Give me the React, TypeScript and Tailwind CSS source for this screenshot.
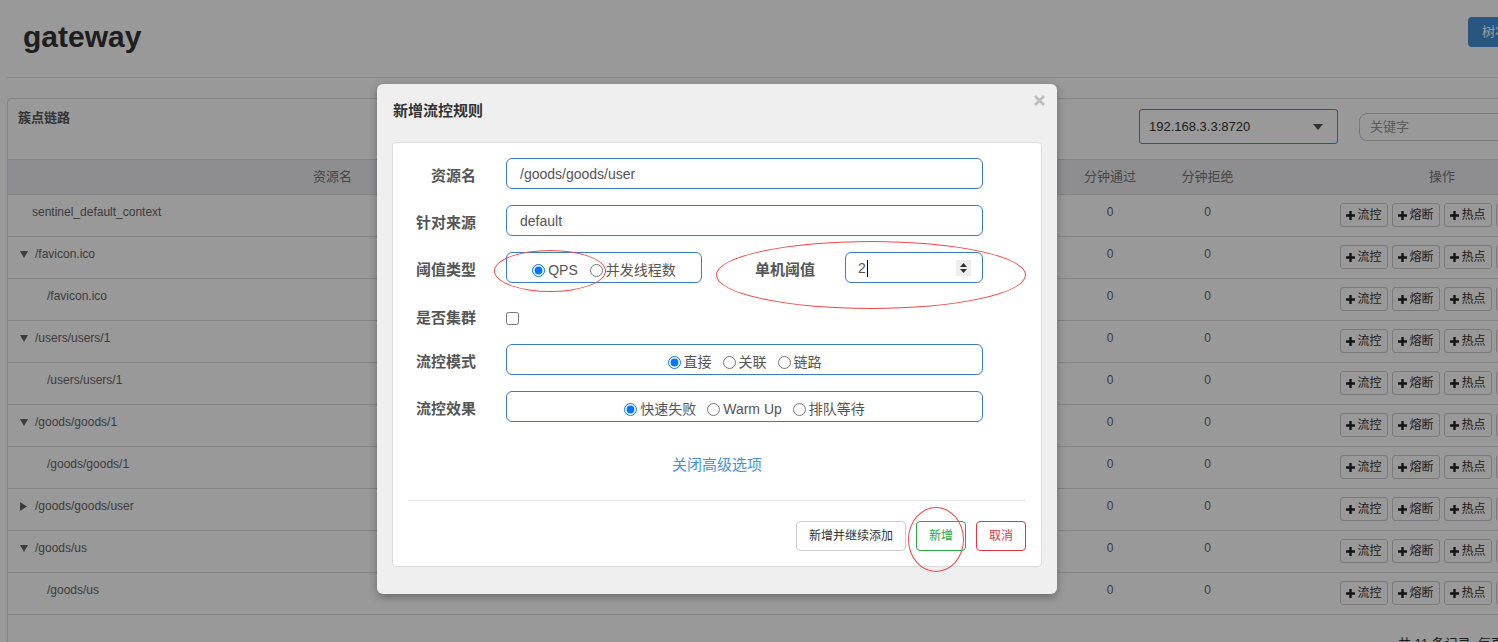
import React from "react";

const rows = [
  { name: "sentinel_default_context", indent: "pl-[24px]", toggle: "" },
  { name: "/favicon.ico", indent: "pl-[12px]", toggle: "down" },
  { name: "/favicon.ico", indent: "pl-[39px]", toggle: "" },
  { name: "/users/users/1", indent: "pl-[12px]", toggle: "down" },
  { name: "/users/users/1", indent: "pl-[39px]", toggle: "" },
  { name: "/goods/goods/1", indent: "pl-[12px]", toggle: "down" },
  { name: "/goods/goods/1", indent: "pl-[39px]", toggle: "" },
  { name: "/goods/goods/user", indent: "pl-[12px]", toggle: "right" },
  { name: "/goods/us", indent: "pl-[12px]", toggle: "down" },
  { name: "/goods/us", indent: "pl-[39px]", toggle: "" },
];

const cols = "grid grid-cols-[649px_101px_101px_101px_101px_98px_97px_372px]";

const Plus = () => (
  <svg width="9" height="9" viewBox="0 0 9 9" className="shrink-0">
    <path d="M3.3 0h2.4v3.3H9v2.4H5.7V9H3.3V5.7H0V3.3h3.3z" fill="#222" />
  </svg>
);

const ActionBtn = ({ label }: { label: string }) => (
  <button className="flex h-[24px] w-[48px] items-center justify-center gap-[2px] rounded-[3px] border border-[#ccc] bg-white text-[12px] leading-[20px] text-[#333]">
    <Plus />
    {label}
  </button>
);

const Toggle = ({ dir }: { dir: string }) =>
  dir === "down" ? (
    <svg width="8" height="7" viewBox="0 0 8 7" className="mr-[7px] shrink-0">
      <path d="M0 0h8L4 7z" fill="#666" />
    </svg>
  ) : (
    <svg width="8" height="9" viewBox="0 0 8 9" className="mr-[7px] shrink-0">
      <path d="M0 0v9l7-4.5z" fill="#666" />
    </svg>
  );

const Radio = ({ label, name, checked }: { label: string; name: string; checked?: boolean }) => (
  <label className="flex items-center gap-[3px]">
    <input type="radio" name={name} defaultChecked={checked} className="m-0 h-[13px] w-[13px]" />
    <span>{label}</span>
  </label>
);

const Field = ({ label, children }: { label: string; children: React.ReactNode }) => (
  <div className="flex h-[31px] items-center">
    <span className="w-[68px] shrink-0 pt-[6px] text-right text-[15px] font-bold text-[#555]">{label}</span>
    <div className="ml-[30px] flex h-full items-center">{children}</div>
  </div>
);

const box = "h-[31px] rounded-[6px] border border-[#3a7cc0] bg-white text-[14px] text-[#555]";

export default function App() {
  return (
    <div className="relative h-[642px] w-[1498px] overflow-hidden bg-white font-['Liberation_Sans','Noto_Sans_CJK_SC',sans-serif]">
      <div className="w-[1636px]">
        <div className="mx-[7px] flex h-[78px] items-start justify-between border-b border-[#e5e5e5] pl-[16px] pr-[81px]">
          <h1 className="mt-[20px] text-[30px] font-bold leading-[33px] text-[#333]">gateway</h1>
          <button className="mt-[17px] h-[30px] w-[80px] rounded-[4px] bg-[#4590d8] text-[13px] text-white">树状视图</button>
        </div>

        <div className="mx-[7px] mt-[20px] rounded-[4px] border border-[#ddd] pb-[40px]">
          <div className="flex h-[61px] items-start border-b border-[#ddd] pt-[10px]">
            <span className="pl-[10px] text-[13px] font-semibold leading-[18px] text-[#555]">簇点链路</span>
            <div className="ml-auto mr-[69px] flex items-center gap-[21px]">
              <div className="flex h-[35px] w-[199px] items-center justify-between rounded-[3px] border border-[#4590d8] bg-white pl-[9px] pr-[14px] text-[13px] text-[#333]">
                192.168.3.3:8720
                <svg width="10" height="6" viewBox="0 0 10 6">
                  <path d="M0 0h10L5 6z" fill="#555" />
                </svg>
              </div>
              <div className="flex h-[28px] w-[200px] items-center rounded-[8px] border border-[#ccc] bg-white pl-[10px] text-[13px] text-[#999]">
                关键字
              </div>
            </div>
          </div>

          <div className={`${cols} h-[35px] items-center border-b border-[#ddd] bg-[#ededf0] text-center text-[13px] text-[#777]`}>
            <span>资源名</span>
            <span>通过QPS</span>
            <span>拒绝QPS</span>
            <span>并发数</span>
            <span>平均RT</span>
            <span>分钟通过</span>
            <span>分钟拒绝</span>
            <span>操作</span>
          </div>

          {rows.map((r, i) => (
            <div key={i} className={`${cols} h-[42px] items-start border-b border-[#ddd] pt-[8px] text-[12px] leading-[18px] text-[#666]`}>
              <div className={`flex items-center ${r.indent}`}>
                {r.toggle && <Toggle dir={r.toggle} />}
                <span>{r.name}</span>
              </div>
              <span className="text-center">0</span>
              <span className="text-center">0</span>
              <span className="text-center">0</span>
              <span className="text-center">0</span>
              <span className="text-center">0</span>
              <span className="text-center">0</span>
              <div className="flex justify-center gap-[4px]">
                <ActionBtn label="流控" />
                <ActionBtn label="熔断" />
                <ActionBtn label="热点" />
                <ActionBtn label="授权" />
              </div>
            </div>
          ))}

          <div className="ml-[1390px] mt-[20px] text-[13px] leading-[18px] text-[#333]">共 11 条记录, 每页 16 条记录</div>
        </div>
      </div>

      <div className="absolute inset-0 bg-black/40" />

      <div className="absolute left-[377px] top-[84px] h-[510px] w-[680px] rounded-[6px] bg-[#efefef] shadow-[0_3px_9px_rgba(0,0,0,0.3)]">
        <div className="flex h-[58px] items-start justify-between pl-[16px] pr-[12px] pt-[16px]">
          <h4 className="text-[15px] font-bold leading-[21px] text-[#333]">新增流控规则</h4>
          <svg width="11" height="11" viewBox="0 0 11 11" className="mt-[-5px]">
            <path d="M1 1l9 9M10 1l-9 9" stroke="#bdbdbd" strokeWidth="2.6" />
          </svg>
        </div>

        <div className="mx-[15px] h-[425px] rounded-[4px] border border-[#ddd] bg-white px-[15px] pt-[15px]">
          <div className="flex flex-col gap-[16px]">
            <Field label="资源名">
              <div className={`${box} flex w-[477px] items-center pl-[13px] pt-[2px]`}>/goods/goods/user</div>
            </Field>
            <Field label="针对来源">
              <div className={`${box} flex w-[477px] items-center pl-[13px] pt-[2px]`}>default</div>
            </Field>
            <Field label="阈值类型">
              <div className={`${box} flex w-[196px] items-center justify-center gap-[12px] pt-[5px]`}>
                <Radio name="grade" label="QPS" checked />
                <Radio name="grade" label="并发线程数" />
              </div>
              <span className="w-[113px] shrink-0 pt-[6px] text-right text-[15px] font-bold text-[#555]">单机阈值</span>
              <div className={`${box} ml-[30px] flex w-[138px] items-center justify-between pl-[12px] pr-[11px]`}>
                <span className="flex items-center pt-[2px]">
                  2<span className="ml-[1px] h-[17px] w-[1px] bg-black" />
                </span>
                <span className="flex h-[16px] w-[15px] flex-col items-center justify-center gap-[2px] bg-[#eee]">
                  <svg width="7" height="4" viewBox="0 0 7 4">
                    <path d="M0 4h7L3.5 0z" fill="#333" />
                  </svg>
                  <svg width="7" height="4" viewBox="0 0 7 4">
                    <path d="M0 0h7L3.5 4z" fill="#333" />
                  </svg>
                </span>
              </div>
            </Field>
            <div className="flex h-[29px] items-end">
              <span className="w-[68px] shrink-0 text-right text-[15px] font-bold leading-[21px] text-[#555]">是否集群</span>
              <input type="checkbox" className="mb-[3px] ml-[30px] h-[13px] w-[13px]" />
            </div>
            <Field label="流控模式">
              <div className={`${box} flex w-[477px] items-center justify-center gap-[11px] pt-[5px]`}>
                <Radio name="strategy" label="直接" checked />
                <Radio name="strategy" label="关联" />
                <Radio name="strategy" label="链路" />
              </div>
            </Field>
            <Field label="流控效果">
              <div className={`${box} flex w-[477px] items-center justify-center gap-[11px] pt-[5px]`}>
                <Radio name="behavior" label="快速失败" checked />
                <Radio name="behavior" label="Warm Up" />
                <Radio name="behavior" label="排队等待" />
              </div>
            </Field>
          </div>

          <div className="mt-[32px] text-center text-[15px] leading-[21px] text-[#4a90d9]">关闭高级选项</div>

          <div className="mt-[25px] border-t border-[#e5e5e5]" />

          <div className="mt-[20px] flex justify-end gap-[10px]">
            <button className="h-[30px] w-[110px] rounded-[4px] border border-[#ccc] bg-white text-[12px] text-[#333]">新增并继续添加</button>
            <button className="h-[30px] w-[50px] rounded-[4px] border border-[#28a745] bg-white text-[12px] text-[#28a745]">新增</button>
            <button className="h-[30px] w-[50px] rounded-[4px] border border-[#dc3545] bg-white text-[12px] text-[#dc3545]">取消</button>
          </div>
        </div>

        <div className="pointer-events-none absolute left-[117px] top-[166px] h-[42px] w-[112px] rounded-[50%] border border-[#ee4a4a]" />
        <div className="pointer-events-none absolute left-[339px] top-[157px] h-[68px] w-[310px] rounded-[50%] border border-[#ee4a4a]" />
        <div className="pointer-events-none absolute left-[531px] top-[423px] h-[65px] w-[56px] rounded-[50%] border border-[#ee4a4a]" />
      </div>
    </div>
  );
}
